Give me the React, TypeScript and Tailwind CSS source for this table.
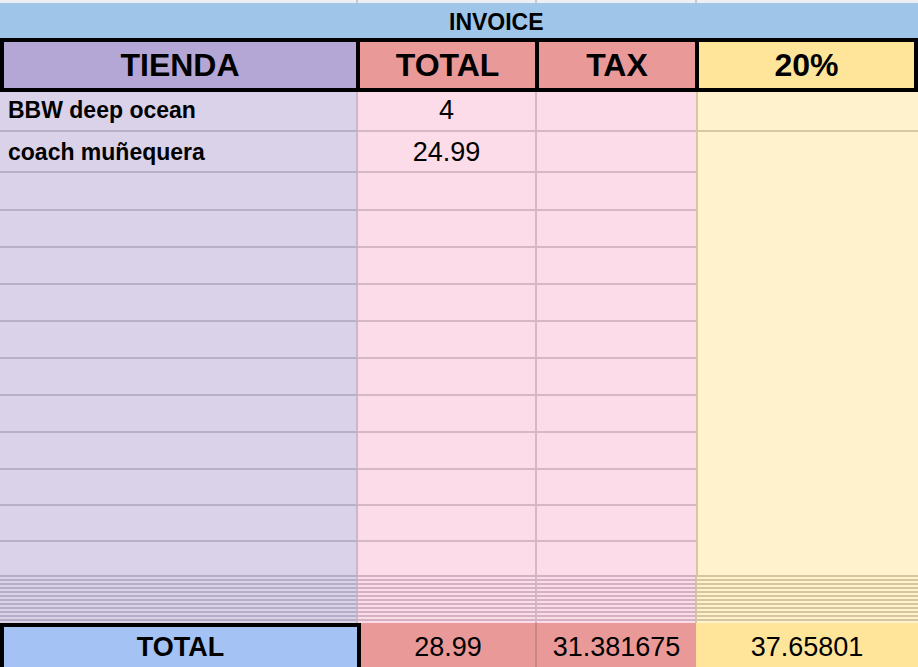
const ROW_HEIGHTS = [40, 41, 38, 37, 37, 37, 37, 37, 37, 37, 36, 36, 33]

const ITEMS = [
    { name: 'BBW deep ocean', total: '4', pad: 'pb-[2px]' },
    { name: 'coach muñequera', total: '24.99', pad: 'pt-[2px]' },
]

const ROW_H_CLASS: Record<number, string> = {
    33: 'h-[33px]',
    36: 'h-[36px]',
    37: 'h-[37px]',
    38: 'h-[38px]',
    40: 'h-[40px]',
    41: 'h-[41px]',
}

export default function App() {
    const stripes = Array.from({ length: 12 })

    return (
        <div className="w-[918px] h-[667px] overflow-hidden bg-white text-black font-['Liberation_Sans',Arial,sans-serif]">

            {/* Frozen strip above the sheet */}
            <div className="flex h-[3px] bg-[#eeeef3]">
                <div className="w-[358px] border-r-2 border-[#c9c9d2]" />
                <div className="w-[179px] border-r-2 border-[#c9c9d2]" />
                <div className="w-[160px] border-r-2 border-[#c9c9d2]" />
                <div className="flex-1" />
            </div>

            {/* Title band */}
            <div className="h-[35px] bg-[#9fc5e8] pl-[449px] pt-[8px]">
                <span className="text-[23px] leading-none font-bold">INVOICE</span>
            </div>

            {/* Header row */}
            <div className="flex h-[54px] bg-black p-[4px] gap-[4px]">
                <div className="w-[352px] bg-[#b4a7d6] flex items-center justify-center text-[32px] leading-none font-bold">TIENDA</div>
                <div className="w-[175px] bg-[#ea9999] flex items-center justify-center text-[32px] leading-none font-bold">TOTAL</div>
                <div className="w-[156px] bg-[#ea9999] flex items-center justify-center text-[32px] leading-none font-bold">TAX</div>
                <div className="flex-1 bg-[#ffe599] flex items-center justify-center text-[32px] leading-none font-bold">20%</div>
            </div>

            {/* Data rows */}
            <div className="flex">
                <div className="w-[696px] flex flex-col">
                    {ROW_HEIGHTS.map((h, i) => {
                        const item = ITEMS[i]
                        const last = i === ROW_HEIGHTS.length - 1
                        return (
                            <div key={i} className={`flex ${ROW_H_CLASS[h]}`}>
                                <div className={`w-[358px] bg-[#d9d2e9] border-r-2 border-[#cab8cb] flex items-center pl-[8px] text-[23px] leading-none font-bold ${item?.pad ?? ''} ${last ? '' : 'border-b-2 border-b-[#b8b0c9]'}`}>
                                    {item?.name}
                                </div>
                                <div className={`w-[179px] bg-[#fbdce8] border-r-2 border-[#d5b7c5] flex items-center justify-center text-[27px] leading-none ${item?.pad ?? ''} ${last ? '' : 'border-b-2 border-b-[#d5b7c5]'}`}>
                                    {item?.total}
                                </div>
                                <div className={`flex-1 bg-[#fbdce8] ${last ? '' : 'border-b-2 border-[#d5b7c5]'}`} />
                            </div>
                        )
                    })}
                </div>
                <div className="flex-1 flex flex-col border-l-2 border-[#d8c7a3] bg-[#fff2cc]">
                    <div className="h-[40px] border-b-2 border-[#d8c8a2]" />
                    <div className="flex-1" />
                </div>
            </div>

            {/* Hidden rows, squeezed */}
            {stripes.map((_, i) => (
                <div key={i} className="flex h-[4px]">
                    <div className="w-[358px] h-[4px] border-t-2 border-[#b5adc6] bg-[#d9d2e9] border-r-2 border-r-[#cab8cb]" />
                    <div className="w-[179px] h-[4px] border-t-2 border-[#d3b1c1] bg-[#fbdce8] border-r-2 border-r-[#d5b7c5]" />
                    <div className="w-[160px] h-[4px] border-t-2 border-[#d3b1c1] bg-[#fbdce8] border-r-2 border-r-[#d8c7a3]" />
                    <div className="flex-1 h-[4px] border-t-2 border-[#d6c59e] bg-[#fff2cc]" />
                </div>
            ))}

            {/* Totals row */}
            <div className="flex h-[48px]">
                <div className="w-[361px] border-[4px] border-black bg-[#a4c2f4] flex items-center justify-center text-[27px] leading-none font-bold">
                    TOTAL
                </div>
                <div className="w-[176px] bg-[#ea9999] border-r-2 border-[#c98888] flex items-center justify-center text-[27px] leading-none">
                    28.99
                </div>
                <div className="w-[159px] bg-[#ea9999] flex items-center justify-center text-[27px] leading-none">
                    31.381675
                </div>
                <div className="flex-1 bg-[#ffe599] flex items-center justify-center text-[27px] leading-none">
                    37.65801
                </div>
            </div>
        </div>
    )
}
